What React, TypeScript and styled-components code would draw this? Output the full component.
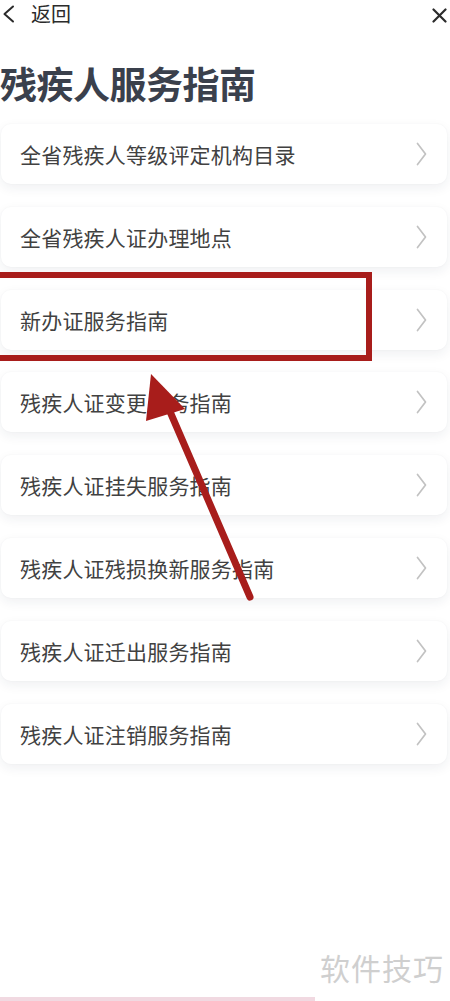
import React from 'react';
import styled, { createGlobalStyle } from 'styled-components';

const GlobalStyle = createGlobalStyle`
  html, body {
    margin: 0;
    padding: 0;
    background: #ffffff;
  }
  body {
    font-family: "Noto Sans CJK SC", "Noto Sans", sans-serif;
  }
`;

const Page = styled.div`
  position: relative;
  width: 450px;
  height: 1001px;
  overflow: hidden;
  background: #ffffff;
`;

const TopBar = styled.div`
  display: flex;
  align-items: center;
  justify-content: space-between;
  height: 28px;
  padding: 0 3px 0 2px;
`;

const BackButton = styled.div`
  display: flex;
  align-items: center;
  gap: 16px;
  font-size: 20px;
  color: #2b2b2b;
  line-height: 1;

  svg {
    width: 13px;
    height: 18px;
  }
`;

const CloseIcon = styled.svg`
  width: 15px;
  height: 15px;
  margin-top: 2px;
`;

const Title = styled.h1`
  margin: 32px 0 18px 0;
  font-size: 37px;
  line-height: 46px;
  font-weight: 700;
  color: #3a404c;
  letter-spacing: -0.5px;
`;

const List = styled.div`
  display: flex;
  flex-direction: column;
  gap: 22.8px;
  padding: 0 3px 0 1px;
`;

const Card = styled.div`
  display: flex;
  align-items: center;
  justify-content: space-between;
  height: 60px;
  padding: 0 20px 0 19px;
  border-radius: 10px;
  background: #ffffff;
  box-shadow: 0 4px 12px rgba(30, 40, 70, 0.07), 0 0 2px rgba(30, 40, 70, 0.04);
`;

const CardText = styled.span`
  font-size: 21px;
  color: #414141;
  letter-spacing: 0.2px;
`;

const Chevron = styled.svg`
  width: 11px;
  height: 24px;
`;

const Highlight = styled.div`
  position: absolute;
  left: -8px;
  top: 272px;
  width: 380px;
  height: 89px;
  box-sizing: border-box;
  border: 6px solid #a81d1b;
  pointer-events: none;
`;

const Arrow = styled.svg`
  position: absolute;
  left: 0;
  top: 0;
  width: 450px;
  height: 1001px;
  pointer-events: none;
`;

const Watermark = styled.div`
  position: absolute;
  right: 6px;
  bottom: 12px;
  font-size: 30px;
  color: #cfcfcf;
  letter-spacing: 1px;
`;

const BottomLine = styled.div`
  position: absolute;
  left: 0;
  bottom: 0;
  width: 315px;
  height: 4px;
  background: #f1d9e1;
`;

const items = [
  '全省残疾人等级评定机构目录',
  '全省残疾人证办理地点',
  '新办证服务指南',
  '残疾人证变更服务指南',
  '残疾人证挂失服务指南',
  '残疾人证残损换新服务指南',
  '残疾人证迁出服务指南',
  '残疾人证注销服务指南',
];

export default function App() {
  return (
    <Page>
      <GlobalStyle />
      <TopBar>
        <BackButton>
          <svg viewBox="0 0 13 18" fill="none">
            <path d="M11 1.5 L2.5 9 L11 16.5" stroke="#2b2b2b" strokeWidth="2" strokeLinecap="round" strokeLinejoin="round" />
          </svg>
          返回
        </BackButton>
        <CloseIcon viewBox="0 0 15 15" fill="none">
          <path d="M1.5 1.5 L13.5 13.5 M13.5 1.5 L1.5 13.5" stroke="#2b2b2b" strokeWidth="2.2" strokeLinecap="round" />
        </CloseIcon>
      </TopBar>
      <Title>残疾人服务指南</Title>
      <List>
        {items.map(text => (
          <Card key={text}>
            <CardText>{text}</CardText>
            <Chevron viewBox="0 0 11 24" fill="none">
              <path d="M1.5 1.5 L9.5 12 L1.5 22.5" stroke="#c2c2c2" strokeWidth="1.7" strokeLinecap="round" strokeLinejoin="round" />
            </Chevron>
          </Card>
        ))}
      </List>
      <Highlight />
      <Arrow viewBox="0 0 450 1001">
        <line x1="250" y1="597" x2="165" y2="400" stroke="#a81d1b" strokeWidth="7" strokeLinecap="round" />
        <polygon points="151,374 185,409 146,421" fill="#a81d1b" />
      </Arrow>
      <Watermark>软件技巧</Watermark>
      <BottomLine />
    </Page>
  );
}
